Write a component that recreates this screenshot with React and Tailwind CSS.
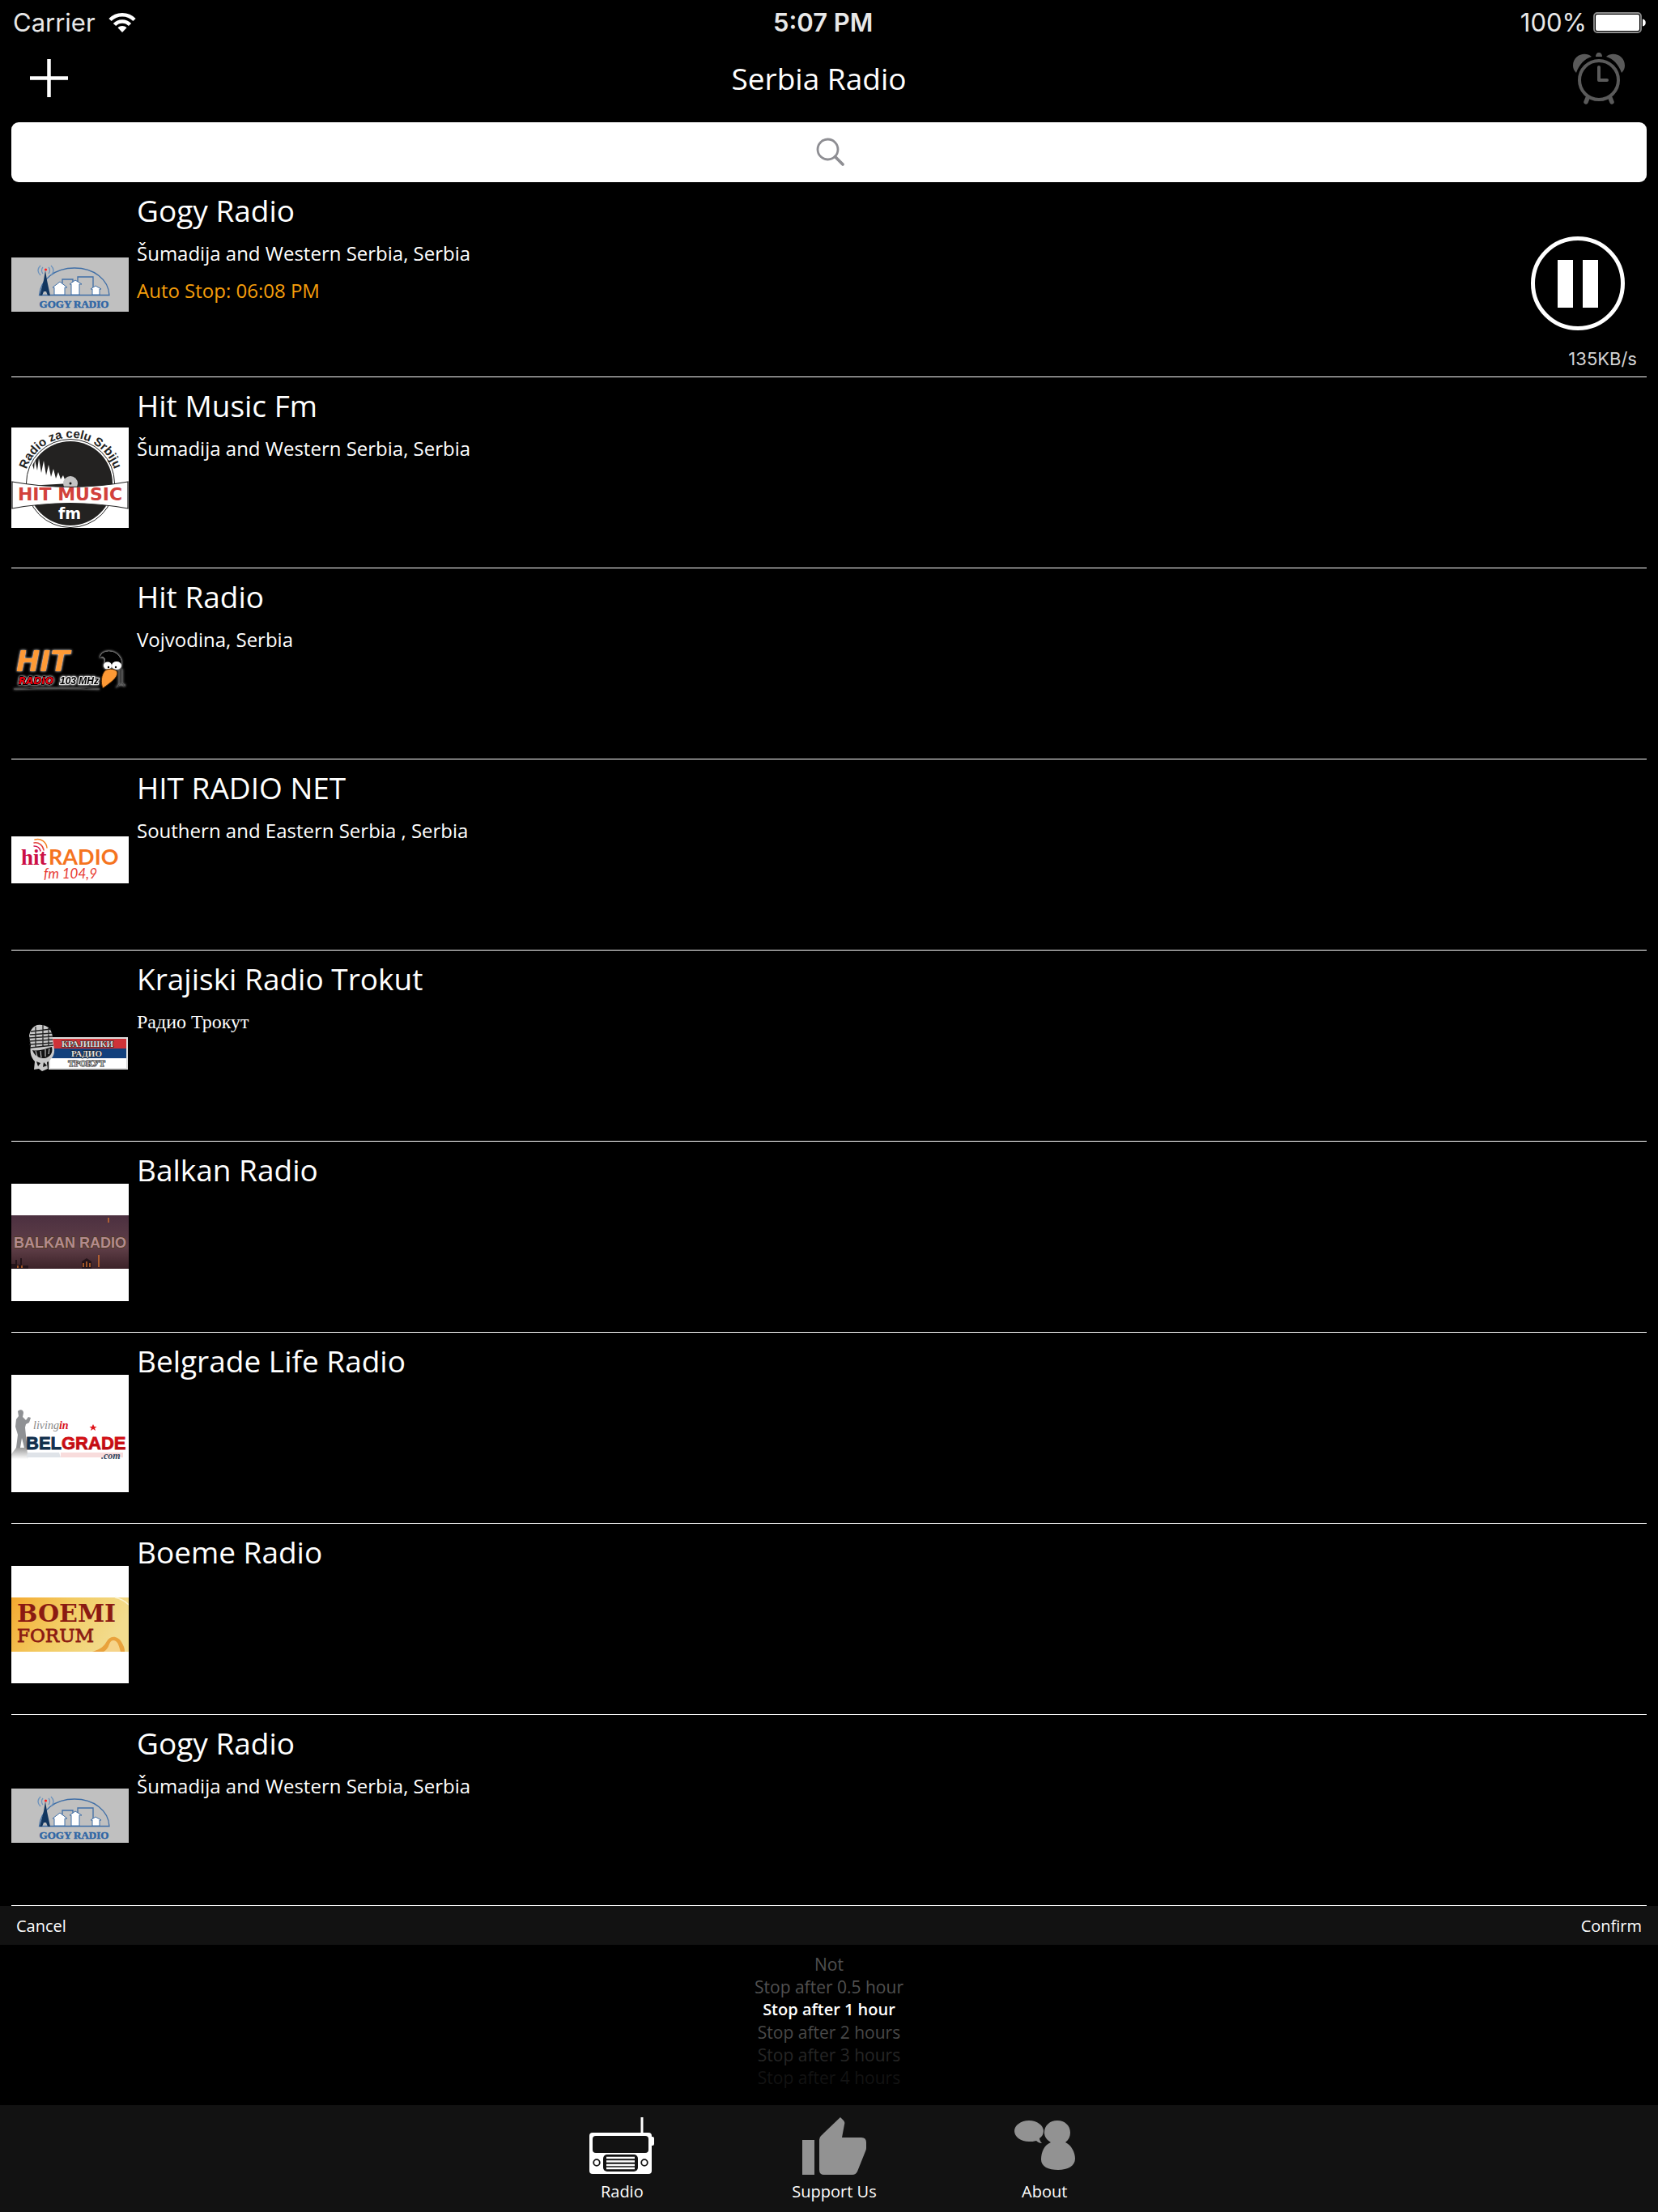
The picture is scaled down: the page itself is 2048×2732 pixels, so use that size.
import React, { useState } from 'react';

const GogyLogo = () => (
  <svg className="w-[145px] h-[67px]" viewBox="0 0 145 67" role="img" aria-label="Gogy Radio">
    <rect width="145" height="67" fill="#c0c0c0" />
    <g fill="none" stroke="#3f6ea6" strokeWidth="1.3">
      <path d="M34.5 46.5C36 27 54 13 78 13s42 14 43 33.500z" />
      <path d="M63 46V27h13v6M82 30v-6h19v22" />
      <path d="M39 20c-2-2-2-6 0-8M36 22c-4-4-4-8 0-12M46 20c2-2 2-6 0-8M49 22c4-4 4-8 0-12" stroke="#6d93bd" />
    </g>
    <g fill="#fff" stroke="#3f6ea6" strokeWidth="1">
      <path d="M53 46V37h-2l9-7 9 7h-3v9z" />
      <path d="M74 46V33h-2l7-5 8 5h-3v13z" />
      <path d="M100 46v-7h-2l6-4 7 4h-2v7z" />
    </g>
    <path d="M42 16l2 12 4 19h-3l-2-5h-3l-2 5h-3l5-19z" fill="#12365f" />
    <circle cx="42.500" cy="15" r="1.600" fill="#f22" />
    <text x="77.500" y="62" textAnchor="middle" fontFamily="Liberation Serif, serif" fontWeight="700" fontSize="13" fill="#2f66a5" stroke="#2f66a5" strokeWidth="0.500">GOGY RADIO</text>
  </svg>
);

const HitMusicLogo = () => (
  <svg className="w-[145px] h-[124px]" viewBox="0 0 145 124" role="img" aria-label="Hit Music Fm">
    <defs>
      <path id="hit-music-arc" d="M16.500 62A57 57 0 0 1 129.500 62" />
      <clipPath id="hit-music-box"><rect width="145" height="124" /></clipPath>
    </defs>
    <rect width="145" height="124" fill="#fff" />
    <g clipPath="url(#hit-music-box)">
      <circle cx="73" cy="69" r="54.500" fill="#fff" stroke="#222" strokeWidth="1" />
      <circle cx="73" cy="69" r="52" fill="#232221" />
      <path d="M73 69L20 72C19 62 22 52 26 46l2 6 1-12 3 13 2-15 3 18 3-15 3 18 3-13 3 15 3-10 3 12 3-8 3 9 3-5 3 8z" fill="#fff" />
      <circle cx="73" cy="69" r="9" fill="#c4c4c4" />
      <circle cx="73" cy="69" r="1.500" fill="#111" />
      <path d="M1 67q72 13 143 0v33q-72-13-143 0z" fill="#fff" stroke="#222" strokeWidth="1.200" />
      <text x="72.500" y="90" textAnchor="middle" fontFamily="DejaVu Sans, sans-serif" fontWeight="700" fontSize="22" fill="#d2413c">HIT MUSIC</text>
      <text x="72" y="113" textAnchor="middle" fontFamily="DejaVu Sans, sans-serif" fontWeight="700" fontSize="19" fill="#fff">fm</text>
      <text fontFamily="Liberation Sans, sans-serif" fontWeight="700" fontSize="15" fill="#222">
        <textPath href="#hit-music-arc" startOffset="50%" textAnchor="middle">Radio za celu Srbiju</textPath>
      </text>
    </g>
  </svg>
);

const HitRadioLogo = () => (
  <svg className="w-[145px] h-[57px]" viewBox="0 0 145 57" role="img" aria-label="Hit Radio 103 MHz">
    <defs>
      <filter id="hit-glow" x="-10%" y="-20%" width="120%" height="140%">
        <feDropShadow dx="0" dy="0" stdDeviation="1.600" floodColor="#fff" />
      </filter>
    </defs>
    <g filter="url(#hit-glow)">
      <text x="6" y="31" fontFamily="DejaVu Sans, sans-serif" fontWeight="700" fontStyle="italic" fontSize="35" fill="#ff9a35">HIT</text>
      <text x="9" y="47" fontFamily="DejaVu Sans, sans-serif" fontWeight="700" fontStyle="italic" fontSize="12" fill="#f00010" stroke="#000" strokeWidth="2" paintOrder="stroke">RADIO</text>
      <text x="60" y="47" fontFamily="Liberation Sans, sans-serif" fontWeight="700" fontStyle="italic" fontSize="12" fill="#000" stroke="#e4e4e4" strokeWidth="2" paintOrder="stroke">103 MHz</text>
      <path d="M3 53q60-2 106 0" stroke="#222" strokeWidth="1" fill="none" />
      <path d="M109 15c2-12 20-12 26 0 3 6 0 9-3 12l-17-4c3-8-2-12-6-8z" fill="#050505" />
      <ellipse cx="119" cy="24" rx="5" ry="4.500" fill="#fff" />
      <ellipse cx="130" cy="24" rx="6" ry="5" fill="#fff" />
      <path d="M133 29v19M137 28v18l3 4M133 48l-4 3M133 48h8" stroke="#222" strokeWidth="1" fill="none" />
    </g>
    <circle cx="120" cy="26" r="1.200" fill="#000" />
    <circle cx="129" cy="26" r="1.200" fill="#000" />
    <path d="M116 30c5-3 14-2 15 3 0 6-8 12-18 19-3-7-2-17 3-22z" fill="#ff9a35" stroke="#4b2400" strokeWidth="1" />
  </svg>
);

const HitNetLogo = () => (
  <svg className="w-[145px] h-[58px]" viewBox="0 0 145 58" role="img" aria-label="hitRADIO fm 104,9">
    <rect width="145" height="58" fill="#fff" />
    <g fill="none" strokeWidth="1.500" strokeLinecap="round">
      <path d="M29 4c8-2 14 3 15 10" stroke="#f58220" />
      <path d="M28 8c6-1 11 3 12 9" stroke="#e2443c" />
      <path d="M28 12c4 0 7 2 8 6" stroke="#d2124a" />
    </g>
    <text x="12" y="35" fontFamily="Liberation Serif, serif" fontWeight="700" fontSize="27" fill="#cc0f45">hit</text>
    <text x="46" y="35" fontFamily="Lato, sans-serif" fontWeight="700" fontSize="27" fill="#f5741f">RADIO</text>
    <text x="73" y="52" textAnchor="middle" fontFamily="Lato, sans-serif" fontStyle="italic" fontSize="17" fill="#e8392f">fm 104,9</text>
  </svg>
);

const TrokutLogo = () => (
  <svg className="w-[145px] h-[66px]" viewBox="0 0 145 66" role="img" aria-label="Крајишки Радио Трокут">
    <rect x="46" y="16" width="98" height="40" fill="#ddd" />
    <rect x="48" y="18" width="94" height="12" fill="#cf3338" />
    <rect x="48" y="30" width="94" height="12" fill="#12407c" />
    <rect x="48" y="42" width="94" height="12" fill="#fff" />
    <g fontFamily="Liberation Serif, serif" fontWeight="700" fontSize="11" textAnchor="middle" fill="#ddd" stroke="#222" strokeWidth="1.200" paintOrder="stroke">
      <text x="94" y="28">КРАЈИШКИ</text>
      <text x="93" y="40">РАДИО</text>
      <text x="93" y="52" fill="#bbb">ТРОКУТ</text>
    </g>
    <path d="M22 14C24 4 30 0 37 1c9 0 14 8 14 16l2 14c1 8-5 14-9 16l1 8-7 3-4-3-6 1 1-10c-6-6-6-14-5-20z" fill="#c9c9c9" />
    <path d="M24 9l25-3M23 13l27-2M22 17l29-2M22 21l29-2M22 25l29-2M23 29l29-3M30 3v26M39 1v27M46 5v22" stroke="#222" strokeWidth="1.300" fill="none" />
    <path d="M26 32c8 2 16-2 24-4 2 8-3 13-9 14-6 0-12-2-15-10zM31 46l5 2-3 4zM40 47l4 4-5 2z" fill="#111" />
    <path d="M30 33l2 7M36 33l1 8M42 31v9M47 30l-1 7" stroke="#ddd" strokeWidth="1" />
  </svg>
);

const BalkanLogo = () => (
  <svg className="w-[145px] h-[145px]" viewBox="0 0 145 145" role="img" aria-label="Balkan Radio">
    <defs>
      <linearGradient id="balkan-sky" x1="0" y1="0" x2="0" y2="1">
        <stop offset="0" stopColor="#4c3040" />
        <stop offset="0.600" stopColor="#603f48" />
        <stop offset="1" stopColor="#3b2228" />
      </linearGradient>
    </defs>
    <rect width="145" height="145" fill="#fff" />
    <rect y="39" width="145" height="66" fill="url(#balkan-sky)" />
    <path d="M0 105v-6h5v-5h2v6h4v-8h2v9h8v4zM87 105v-9l6-4 6 4v9z" fill="#24141a" />
    <path d="M8 104v-3M13 104v-3M89 103v-5M93 103v-7M97 103v-5M108 103V88M120 48v-6" stroke="#e0772f" strokeWidth="1.300" />
    <text x="72.500" y="79" textAnchor="middle" fontFamily="Liberation Sans, sans-serif" fontWeight="700" fontSize="18" fill="#b48a8e" stroke="#4d3a22" strokeWidth="1.600" paintOrder="stroke">BALKAN RADIO</text>
  </svg>
);

const BelgradeLogo = () => (
  <svg className="w-[145px] h-[145px]" viewBox="0 0 145 145" role="img" aria-label="living in Belgrade .com">
    <defs>
      <linearGradient id="belgrade-red" x1="0" y1="0" x2="0" y2="1">
        <stop offset="0" stopColor="#f0131a" />
        <stop offset="1" stopColor="#a0070c" />
      </linearGradient>
      <linearGradient id="belgrade-fade" x1="0" y1="0" x2="0" y2="1">
        <stop offset="0" stopColor="#999" />
        <stop offset="1" stopColor="#fff" />
      </linearGradient>
    </defs>
    <rect width="145" height="145" fill="#fff" />
    <path d="M0 98l6-8h13l2 14H0z" fill="url(#belgrade-fade)" />
    <path d="M8 45c3-3 7-2 7 2l-1 5 4 4 3-4 3 1-2 6-4 2-1 4 1 10 2 15h-4l-3-12-2 12H6l2-16-3-10 1-9 3-4z" fill="#8f9194" />
    <path d="M20 96h39l2 6H19z" fill="#dfe3e8" />
    <path d="M61 96h77v6H61z" fill="#f8dcdc" />
    <text x="27" y="67" fontFamily="Liberation Serif, serif" fontStyle="italic" fontSize="14" fill="#888">living<tspan fill="#d9141b" fontWeight="700">in</tspan></text>
    <text x="18" y="92" fontFamily="Liberation Sans, sans-serif" fontWeight="700" fontSize="22" fill="#12304d" stroke="#12304d" strokeWidth="0.800">BEL<tspan fill="url(#belgrade-red)" stroke="#c80f14">GRADE</tspan></text>
    <path d="M101 61l1.500 3h3l-2.500 2 1 3-3-2-3 2 1-3-2.500-2h3z" fill="#e0161c" />
    <text x="111" y="104" fontFamily="Liberation Serif, serif" fontStyle="italic" fontWeight="700" fontSize="12" fill="#33475e">.com</text>
  </svg>
);

const BoemiLogo = () => (
  <svg className="w-[145px] h-[145px]" viewBox="0 0 145 145" role="img" aria-label="Boemi Forum">
    <defs>
      <linearGradient id="boemi-gold" x1="0" y1="0" x2="1" y2="0.300">
        <stop offset="0" stopColor="#f4a92f" />
        <stop offset="0.500" stopColor="#f3cb62" />
        <stop offset="1" stopColor="#f2dc8e" />
      </linearGradient>
    </defs>
    <rect width="145" height="145" fill="#fff" />
    <rect y="39" width="145" height="67" fill="url(#boemi-gold)" />
    <path d="M100 106c10-3 14-6 18-13 5-8 14-6 18 1 3 5 4 8 4 12z" fill="#e9a23c" />
    <path d="M114 106c8-4 6-14 12-14s7 8 9 14z" fill="#f6d48a" />
    <path d="M128 39q10 2 17 9" stroke="#fbf2cd" strokeWidth="1.500" fill="none" />
    <g fontFamily="DejaVu Serif, serif" fill="#8b1a12">
      <text x="7" y="69" fontWeight="700" fontSize="30">BOEMI</text>
      <text x="7" y="94" fontSize="23" stroke="#8b1a12" strokeWidth="0.800">FORUM</text>
    </g>
  </svg>
);

const stations = [
  { id: 1, name: 'Gogy Radio', place: 'Šumadija and Western Serbia, Serbia', Logo: GogyLogo, autoStop: 'Auto Stop: 06:08 PM', speed: '135KB/s' },
  { id: 2, name: 'Hit Music Fm', place: 'Šumadija and Western Serbia, Serbia', Logo: HitMusicLogo },
  { id: 3, name: 'Hit Radio', place: 'Vojvodina, Serbia', Logo: HitRadioLogo },
  { id: 4, name: 'HIT RADIO NET', place: 'Southern and Eastern Serbia , Serbia', Logo: HitNetLogo },
  { id: 5, name: 'Krajiski Radio Trokut', place: 'Радио Трокут', serif: true, Logo: TrokutLogo },
  { id: 6, name: 'Balkan Radio', Logo: BalkanLogo },
  { id: 7, name: 'Belgrade Life Radio', Logo: BelgradeLogo },
  { id: 8, name: 'Boeme Radio', Logo: BoemiLogo },
  { id: 9, name: 'Gogy Radio', place: 'Šumadija and Western Serbia, Serbia', Logo: GogyLogo },
];

const stopOptions = [
  { label: 'Not', color: 'text-[#505050]' },
  { label: 'Stop after 0.5 hour', color: 'text-[#505050]' },
  { label: 'Stop after 1 hour', color: 'text-[#505050]' },
  { label: 'Stop after 2 hours', color: 'text-[#484848]' },
  { label: 'Stop after 3 hours', color: 'text-[#262626]' },
  { label: 'Stop after 4 hours', color: 'text-[#131313]' },
];

const StatusBar = () => (
  <div className="flex h-14 items-center pl-4 pr-[14px] font-['Inter',sans-serif] text-[31px] text-[#e8e8e8]">
    <span>Carrier</span>
    <svg className="ml-4 w-[34px] h-[26px]" viewBox="0 0 34 26" aria-label="Wi-Fi">
      <g fill="none" stroke="#fff" strokeWidth="4.500">
        <path d="M2 9.500C10 1 24 1 32 9.500" />
        <path d="M7.500 15.500c5-5.500 14-5.500 19 0" />
      </g>
      <path d="M17 25l-5.500-5.800c3-3 8-3 11 0z" fill="#fff" />
    </svg>
    <span className="flex-1 pr-3 text-center font-semibold">5:07 PM</span>
    <span>100%</span>
    <svg className="ml-2 w-[66px] h-[26px]" viewBox="0 0 66 26" aria-label="Battery full">
      <rect x="1" y="1" width="58" height="24" rx="4" fill="none" stroke="#8f8f8f" strokeWidth="1.800" />
      <rect x="3" y="3" width="54" height="20" rx="2" fill="#fff" />
      <path d="M61 8.500c5 0 5 9 0 9z" fill="#fff" />
    </svg>
  </div>
);

const Header = ({ onTimer }) => (
  <header className="mb-[14px] flex h-[81px] items-center pl-[37px] pr-[41px]">
    <button type="button" aria-label="Add station">
      <svg className="w-[47px] h-[47px]" viewBox="0 0 47 47" stroke="#fff" strokeWidth="4.500">
        <path d="M0 23.500h47M23.500 0v47" />
      </svg>
    </button>
    <h1 className="flex-1 pr-1 text-center text-[37px] leading-[60px]">Serbia Radio</h1>
    <button type="button" aria-label="Sleep timer" onClick={onTimer}>
      <svg className="w-16 h-16" viewBox="0 0 64 64">
        <g fill="#5a5a5a">
          <path d="M0 16C0 3 15-2 23 5 14 8 8 14 4 25 1 22 0 19 0 16zM64 16C64 3 49-2 41 5c9 3 15 9 19 20 3-3 4-6 4-9z" />
          <path d="M28 5c0-7 8-7 8 0z" />
        </g>
        <g fill="none" stroke="#5a5a5a">
          <circle cx="32" cy="34" r="24" strokeWidth="4" />
          <path d="M32 18v16h10" strokeWidth="4" strokeLinecap="round" strokeLinejoin="round" />
          <path d="M18 56l-2 5M46 56l2 5" strokeWidth="5.500" strokeLinecap="round" />
        </g>
      </svg>
    </button>
  </header>
);

const SearchBox = () => (
  <div className="relative mx-[14px]">
    <input type="search" aria-label="Search" className="block h-[74px] w-full rounded-[9px] bg-white px-4 text-center text-[24px] text-black outline-none" />
    <svg className="pointer-events-none absolute inset-y-0 right-0 left-1 m-auto w-[36px] h-[36px]" viewBox="0 0 36 36" fill="none" stroke="#8e8e93">
      <circle cx="14.500" cy="14.500" r="12.500" strokeWidth="2.800" />
      <path d="M23.500 23.500l9.500 9.500" strokeWidth="3.800" strokeLinecap="round" />
    </svg>
  </div>
);

const StationRow = ({ station }) => {
  const { Logo } = station;

  return (
    <li className={`flex border-b border-white ${station.autoStop ? 'h-[241px]' : 'h-[236px]'}`}>
      <div className="flex w-[145px] shrink-0 items-center pt-[13px]">
        <Logo />
      </div>
      <div className="flex-1 pl-[10px] pt-[5px]">
        <h2 className="text-[37px] leading-[60px]">{station.name}</h2>
        {station.place && (
          <p className={`text-[24px] leading-[46px] ${station.serif ? "font-['Liberation_Serif',serif]" : ''}`}>{station.place}</p>
        )}
        {station.autoStop && (
          <p className="text-[24px] leading-[46px] text-[#f59e0b]">{station.autoStop}</p>
        )}
      </div>
      {station.speed && (
        <div className="flex flex-col items-end justify-between pt-[67px] pb-[6px]">
          <button type="button" aria-label="Pause" className="mr-[27px]">
            <svg className="w-[116px] h-[116px]" viewBox="0 0 116 116">
              <circle cx="58" cy="58" r="55.500" fill="none" stroke="#fff" strokeWidth="5" />
              <path d="M33 29h19v59H33zM64 29h19v59H64z" fill="#fff" />
            </svg>
          </button>
          <span className="mr-3 font-['Inter',sans-serif] text-[22px] leading-8 text-[#d4d4d4]">{station.speed}</span>
        </div>
      )}
    </li>
  );
};

const StopPicker = ({ value, onChange }) => (
  <section>
    <div className="flex h-12 items-center justify-between bg-[#121212] px-5 pt-[2px] text-[20px]">
      <button type="button">Cancel</button>
      <button type="button">Confirm</button>
    </div>
    <div role="radiogroup" aria-label="Auto stop" className="flex h-[198px] flex-col items-center pt-[10px]">
      {stopOptions.map((option) => (
        <label
          key={option.label}
          className={`relative h-7 cursor-pointer leading-7 ${option.label === value ? 'text-[20px] font-semibold text-white' : `text-[21px] ${option.color}`}`}
        >
          <input
            type="radio"
            name="auto-stop"
            className="sr-only"
            checked={option.label === value}
            onChange={() => onChange(option.label)}
          />
          {option.label}
        </label>
      ))}
    </div>
  </section>
);

const TabBar = () => (
  <nav className="flex h-[132px] justify-center gap-[170px] bg-[#121212] pl-2 pt-[15px] text-[20px] leading-9">
    <a href="#radio" className="flex flex-col items-center">
      <svg className="w-20 h-[74px]" viewBox="0 0 80 74">
        <path d="M63.500 0h3v20h-3zM76 24h2q2 0 2 2v7q0 2-2 2h-2z" fill="#fff" />
        <rect y="19" width="77" height="51" rx="4" fill="#fff" />
        <rect x="4" y="23" width="69" height="21" rx="4" fill="#121212" />
        <rect x="17" y="46" width="43" height="21" rx="5" fill="#121212" />
        <path d="M21 50h35M21 54.500h35M21 59h35M21 63h35" stroke="#fff" strokeWidth="2.600" />
        <circle cx="9" cy="56" r="3.800" fill="none" stroke="#121212" strokeWidth="1.800" />
        <circle cx="68" cy="56" r="3.800" fill="none" stroke="#121212" strokeWidth="1.800" />
      </svg>
      Radio
    </a>
    <a href="#support" className="flex flex-col items-center">
      <svg className="w-20 h-[74px]" viewBox="0 0 80 74" fill="#929292">
        <path d="M1 28h15v43H1z" />
        <path d="M28 71q-6 0-6-6V28q0-3 2-5L48 0l4 4q2 2 1 5l-3 16h24q6 0 6 6v7q0 2-1 4L69 67q-2 4-6 4z" />
      </svg>
      Support Us
    </a>
    <a href="#about" className="flex flex-col items-center">
      <svg className="w-[75px] h-[74px]" viewBox="0 0 75 74" fill="#929292">
        <path d="M18 4c10 0 18 6 18 13 0 4-2 7-5 9 0 2 1 4 3 6-3 0-5-1-7-3-3 1-6 1-9 1C8 30 0 24 0 17S8 4 18 4z" />
        <path d="M53 4c9 0 16 6 16 15 0 5-2 9-6 12 7 3 12 12 12 20 0 9-9 14-21 14s-21-4-21-13c0-9 4-18 12-21-5-3-8-7-8-12 0-9 7-15 16-15z" />
      </svg>
      About
    </a>
  </nav>
);

const App = () => {
  const [stopAfter, setStopAfter] = useState('Stop after 1 hour');
  const [pickerOpen, setPickerOpen] = useState(true);

  return (
    <div className="flex min-h-screen flex-col bg-black font-['Open_Sans',sans-serif] text-white">
      <StatusBar />
      <Header onTimer={() => setPickerOpen(!pickerOpen)} />
      <SearchBox />
      <main className="flex-1">
        <ul className="mx-[14px]">
          {stations.map((station) => (
            <StationRow key={station.id} station={station} />
          ))}
        </ul>
      </main>
      {pickerOpen && <StopPicker value={stopAfter} onChange={setStopAfter} />}
      <TabBar />
    </div>
  );
};

export default App;
